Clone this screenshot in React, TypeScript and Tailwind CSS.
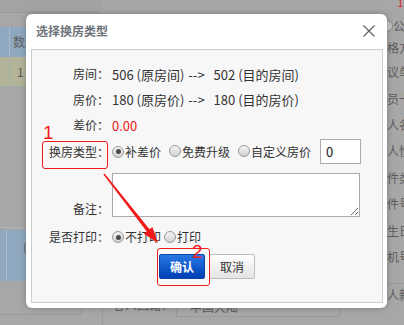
import React from "react";

function Radio({ checked }: { checked?: boolean }) {
  return (
    <span className="inline-flex items-center justify-center w-[12px] h-[12px] rounded-full border border-[#9a9a9a] bg-linear-to-b from-[#f4f4f4] to-[#d2d2d2] shrink-0">
      {checked ? <span className="w-[5px] h-[5px] rounded-full bg-[#4a4a4a]" /> : null}
    </span>
  );
}

function Row({ label, children, h, className = "" }: { label: string; children?: React.ReactNode; h: string; className?: string }) {
  return (
    <div className={`flex items-center ${h} ${className}`}>
      <div className="w-[77px] text-right shrink-0">{label}</div>
      <div className="ml-[3px] flex items-center">{children}</div>
    </div>
  );
}

function Change({ from, to }: { from: string; to: string }) {
  return (
    <span className="text-[13px] flex items-center whitespace-nowrap">
      <span>{from}</span>
      <span className="ml-[4px]">--&gt;</span>
      <span className="ml-[9px]">{to}</span>
    </span>
  );
}

export default function App() {
  const rightLabels = ["协议单位", "会员卡号", "客人名称", "客人性别", "证件类型", "证件号码", "出生日期", "手机号码"];
  return (
    <div className="relative w-[404px] h-[325px] overflow-hidden bg-[#a7a7a7] font-['Noto_Sans_CJK_SC',sans-serif] text-[12px] leading-none">
      {/* background page */}
      <div className="flex h-full text-[#5c5c5c]">
        <div className="flex-1 flex flex-col">
          <div className="h-[13px] w-[101px] border-b border-[#989898] bg-[#a3a3a3]" />
          <div className="h-[14px]" />
          <div className="flex h-[30px] w-[330px] bg-[#8fa8bf]">
            <div className="w-[10px] border-r border-[#a9bccc]" />
            <div className="pl-[3px] flex items-center">数量</div>
          </div>
          <div className="flex h-[30px] w-[330px] bg-[#b3b399] border-b border-[#9fa9a6]">
            <div className="w-[10px] border-r border-[#a3b0a6]" />
            <div className="pl-[7px] flex items-center">1</div>
          </div>
          <div className="h-[140px]" />
          <div className="h-[3px] border-t border-[#b2b2b2] w-[330px]" />
          <div className="flex h-[51px] w-[330px] bg-[#8fa8bf]">
            <div className="w-[7px] border-r border-[#a9bccc]" />
            <div className="pl-[16px] pt-[11px]">(</div>
          </div>
          <div className="flex h-[44px]">
            <div className="w-[82px] h-[34px] border-r border-b border-[#999]" />
            <div className="w-[20px]" />
            <div className="flex-1 flex items-start pt-[15px] border-l border-[#999]">
              <div className="pl-[10px] pt-[3px]">客人国籍：</div>
              <div className="ml-[3px] w-[164px] h-[21px] border border-[#999] pl-[13px] pt-[4px]">中国大陆</div>
            </div>
          </div>
        </div>
        <div className="w-[29px] flex flex-col shrink-0">
          <div className="h-[16px]" />
          <div className="h-[20px] flex items-center whitespace-nowrap">
            <span className="ml-[6px] w-[12px] h-[12px] rounded-full border border-[#888] bg-[#c4c4c4] shrink-0" />
            <span>公司</span>
          </div>
          <div className="h-[23px] flex items-center whitespace-nowrap">价格方案</div>
          {rightLabels.map((l) => (
            <div key={l} className="h-[26.4px] flex items-center whitespace-nowrap">{l}</div>
          ))}
          <div className="h-[14px] border-b border-[#999] w-[60px] -ml-[10px]" />
          <div className="h-[22px] flex items-center whitespace-nowrap">客人新增</div>
        </div>
      </div>
      <div className="absolute right-[1px] top-[-2px] text-[#e02020] text-[10px]">1</div>

      {/* dialog */}
      <div className="absolute left-[26px] top-[14px] w-[361px] h-[294px] bg-white rounded-[6px] shadow-[0_0_6px_rgba(0,0,0,0.25)] flex flex-col">
        <div className="h-[33px] flex items-center justify-between pl-[10px] pr-[12px]">
          <span className="font-bold text-[#6d7279]">选择换房类型</span>
          <svg width="12" height="12" viewBox="0 0 12 12">
            <path d="M0.5 0.5 L11.5 11.5 M11.5 0.5 L0.5 11.5" stroke="#5a5a5a" strokeWidth="1.1" fill="none" />
          </svg>
        </div>
        <div className="ml-[5px] mr-[4px] mt-[2px] h-[254px] border border-[#cdcdcd] bg-[#f7f7f7] text-[#333] flex flex-col">
          <div className="h-[11px]" />
          <Row label="房间：" h="h-[26px]"><Change from="506 (原房间)" to="502 (目的房间)" /></Row>
          <Row label="房价：" h="h-[25px]"><Change from="180 (原房价)" to="180 (目的房价)" /></Row>
          <Row label="差价：" h="h-[26px]"><span className="text-[13px] text-[#f01818]">0.00</span></Row>
          <Row label="换房类型：" h="h-[27px]">
            <Radio checked />
            <span className="ml-[1px]">补差价</span>
            <span className="ml-[8px]"><Radio /></span>
            <span className="ml-[1px]">免费升级</span>
            <span className="ml-[8px]"><Radio /></span>
            <span className="ml-[1px]">自定义房价</span>
            <input readOnly value="0" className="ml-[9px] w-[41px] h-[25px] border border-[#ababab] bg-white pl-[5px] text-[13px] text-[#222] outline-none" />
          </Row>
          <div className="flex items-end mt-[8px] h-[44px]">
            <div className="w-[77px] text-right shrink-0 pb-[2px]">备注：</div>
            <textarea readOnly className="ml-[3px] w-[248px] h-[44px] border border-[#ababab] bg-white outline-none" />
          </div>
          <Row label="是否打印：" h="h-[26px] mt-[7px]">
            <Radio checked />
            <span className="ml-[1px]">不打印</span>
            <span className="ml-[3px]"><Radio /></span>
            <span className="ml-[1px]">打印</span>
          </Row>
          <div className="flex justify-center gap-[4px] mt-[4px]">
            <button className="w-[46px] h-[25px] rounded-[2px] border border-[#0b47a8] bg-linear-to-b from-[#2a78e4] to-[#003fb4] text-white font-bold text-[12px]">确认</button>
            <button className="w-[46px] h-[25px] rounded-[2px] border border-[#bdbdbd] bg-linear-to-b from-[#ffffff] to-[#e4e4e4] text-[#333] text-[12px]">取消</button>
          </div>
        </div>
      </div>

      {/* annotations */}
      <div className="absolute left-[42px] top-[141px] w-[66px] h-[28px] border border-[#f21b1b] rounded-[3px]" />
      <div className="absolute left-[157px] top-[248px] w-[53px] h-[38px] border border-[#f21b1b] rounded-[3px]" />
      <div className="absolute left-[43px] top-[123px] text-[#f21b1b] text-[19px] leading-none font-['Liberation_Sans',sans-serif]">1</div>
      <div className="absolute left-[192px] top-[242px] text-[#f21b1b] text-[19px] leading-none font-['Liberation_Sans',sans-serif]">2</div>
      <svg className="absolute left-0 top-0 pointer-events-none" width="404" height="325" viewBox="0 0 404 325">
        <polygon points="103.4,174.5 104.6,173.5 149.5,229.3 152.4,227 158,243 143.8,233.8 146.7,231.5" fill="#f21b1b" />
      </svg>
    </div>
  );
}
